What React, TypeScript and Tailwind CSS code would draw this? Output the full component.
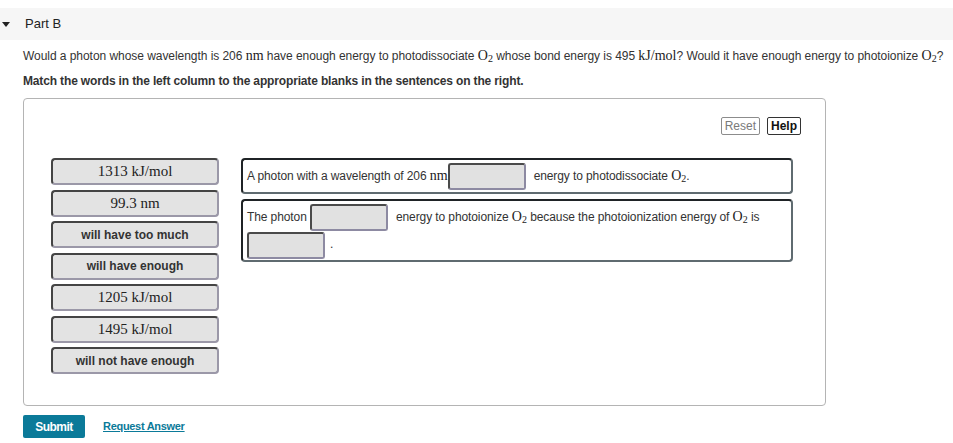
const sans = "font-['Liberation_Sans',Arial,sans-serif]";
const serif = "font-['Liberation_Serif','DejaVu_Serif',serif]";

function M({ children, big }: { children: React.ReactNode; big?: boolean }) {
  return (
    <span className={`${serif} ${big ? "text-[15px]" : "text-[14px]"} font-normal tracking-normal text-[#222]`}>
      {children}
    </span>
  );
}

function O2() {
  return (
    <M>
      O<span className="relative top-[2px] text-[10px]">2</span>
    </M>
  );
}

function Blank() {
  return (
    <span className="inline-block h-[27px] w-[78px] rounded-[3px] border-2 border-t-[#4a4a4a] border-l-[#4a4a4a] border-r-[#8d8aa2] border-b-[#8d8aa2] bg-[#e1e1e1] align-middle" />
  );
}

const items: React.ReactNode[] = [
  <M key="a" big>1313 kJ/mol</M>,
  <M key="b" big>99.3 nm</M>,
  "will have too much",
  "will have enough",
  <M key="c" big>1205 kJ/mol</M>,
  <M key="d" big>1495 kJ/mol</M>,
  "will not have enough",
];

export default function App() {
  return (
    <div className={`${sans} min-h-[443px] bg-white pt-2 text-[12px] text-[#333]`}>
      {/* part header */}
      <div className="flex h-8 items-center bg-[#f6f6f6]">
        <svg width="8" height="5" viewBox="0 0 8 5" className="ml-[2px]">
          <path d="M0 0h8L4 5z" fill="#222" />
        </svg>
        <span className="ml-[15px] text-[13px] text-[#222]">Part B</span>
      </div>

      <div className="px-[23px]">
        <p className="mt-[8px] whitespace-nowrap leading-[16px] tracking-[-0.05px]">
          Would a photon whose wavelength is 206 <M>nm</M> have enough energy to photodissociate <O2 /> whose bond
          energy is 495 <M>kJ/mol</M>? Would it have enough energy to photoionize <O2 />?
        </p>
        <p className="mt-[8px] whitespace-nowrap font-bold leading-[16px] tracking-[-0.15px]">
          Match the words in the left column to the appropriate blanks in the sentences on the right.
        </p>

        <div className="mt-[9px] w-[803px] rounded-[4px] border border-[#b4b4b4] pb-[31px] pl-[27px] pr-[24px] pt-[18px]">
          <div className="flex justify-end gap-[7px]">
            <button className="h-[18px] rounded-[2px] border border-[#8c8c8c] px-[3px] text-[12px] leading-[16px] text-[#7a7a7a]">
              Reset
            </button>
            <button className="h-[18px] rounded-[2px] border border-[#333] px-[3px] text-[12px] font-bold leading-[16px] text-[#111]">
              Help
            </button>
          </div>

          <div className="mt-[23px] flex gap-[22px]">
            <div className="flex w-[168px] flex-col gap-[4.5px]">
              {items.map((it, i) => (
                <div
                  key={i}
                  className="flex h-[27px] items-center justify-center rounded-[4px] border-2 border-t-[#444] border-l-[#444] border-r-[#9b98a8] border-b-[#9b98a8] bg-[#e3e3e3] text-[12px] font-bold text-[#333]"
                >
                  {it}
                </div>
              ))}
            </div>

            <div className="flex w-[552px] flex-col gap-[5px]">
              <div className="h-[36px] rounded-[4px] border-2 border-t-[#1f2326] border-l-[#1f2326] border-r-[#5f6b70] border-b-[#5f6b70] px-[4px] pt-[2px] leading-[27px] tracking-[-0.1px]">
                A photon with a wavelength of 206 <M>nm</M>
                <Blank />
                <span className="ml-[8px]">
                  energy to photodissociate <O2 />.
                </span>
              </div>
              <div className="h-[63px] rounded-[4px] border-2 border-t-[#1f2326] border-l-[#1f2326] border-r-[#5f6b70] border-b-[#5f6b70] px-[4px] pt-[2px] leading-[27px] tracking-[-0.1px]">
                The photon <Blank />
                <span className="ml-[8px]">
                  energy to photoionize <O2 /> because the photoionization energy of <O2 /> is
                </span>
                <br />
                <Blank />
                <span className="ml-[5px]">.</span>
              </div>
            </div>
          </div>
        </div>

        <div className="mt-[9px] flex items-center gap-[18px]">
          <button className="h-[23px] w-[62px] rounded-[2px] bg-[#0b7a99] text-[12px] font-bold tracking-[-0.5px] text-white">
            Submit
          </button>
          <a className="text-[11px] font-bold tracking-[-0.3px] text-[#0b7a99] underline">Request Answer</a>
        </div>
      </div>
    </div>
  );
}
